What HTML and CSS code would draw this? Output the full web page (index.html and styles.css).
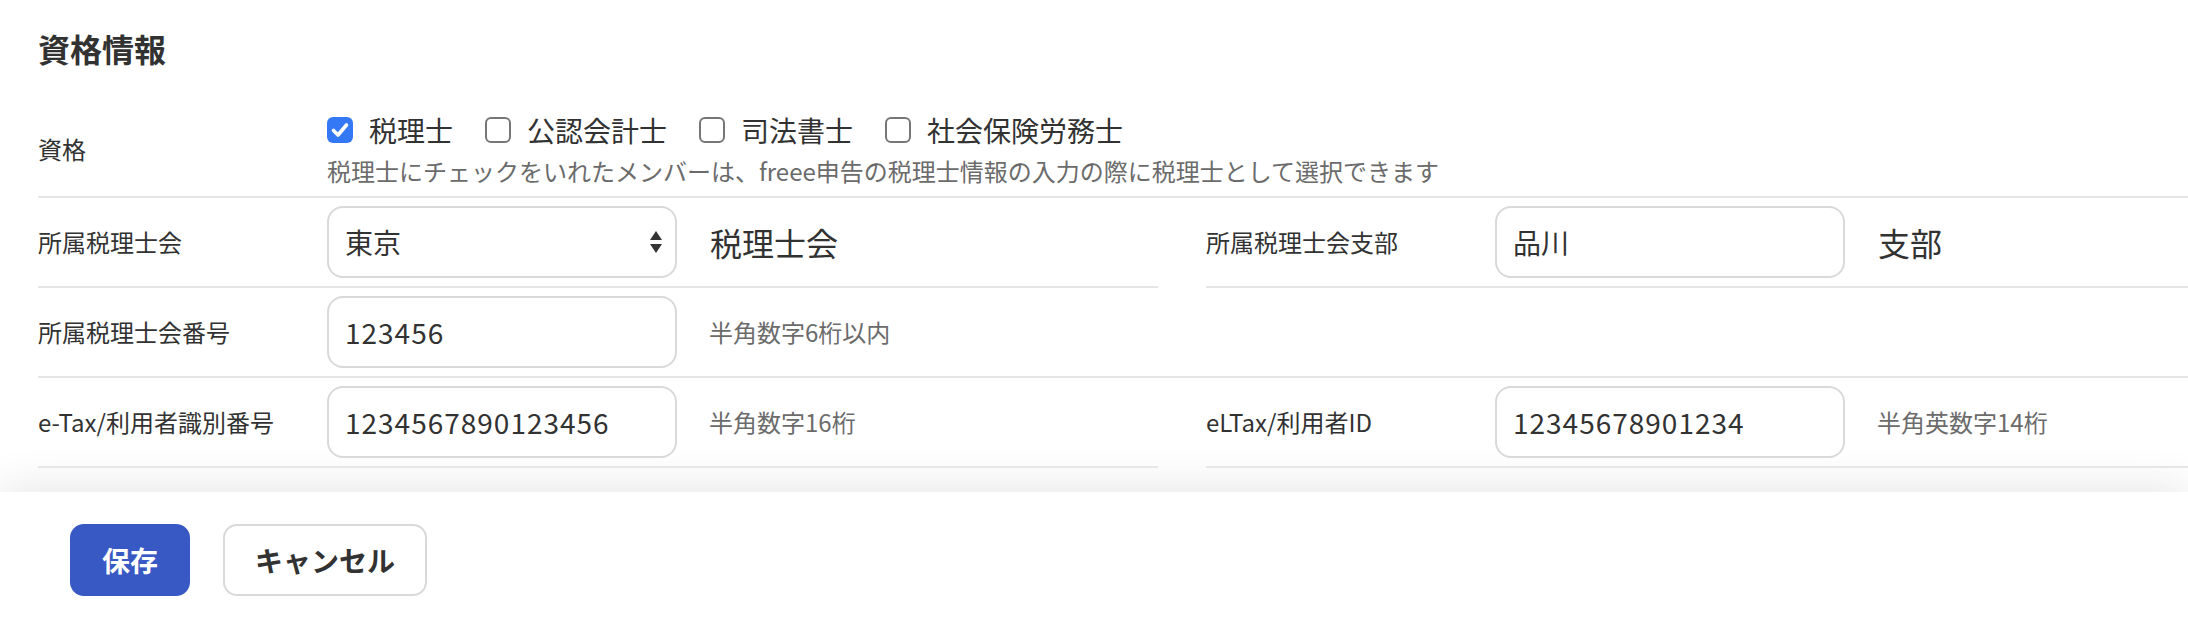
FILE: index.html
```html
<!DOCTYPE html>
<html>
<head>
    <title>資格情報</title>
    <meta name="viewport" content="width=device-width, initial-scale=1">
    <link rel="stylesheet" href="styles.css">
</head>
<body>
    <section class="section">
        <h2 class="section-title">資格情報</h2>

        <div class="row row-full row-tall">
            <div class="row-label">資格</div>
            <div class="row-body">
                <div class="check-list">
                    <label class="check">
                        <span class="check-box is-checked">
                            <svg width="26" height="26" viewBox="0 0 26 26"><polyline points="6.5,13.5 11,18 19.5,8" fill="none" stroke="#fff" stroke-width="3.6" stroke-linecap="round" stroke-linejoin="round"/></svg>
                        </span>
                        税理士
                    </label>
                    <label class="check"><span class="check-box"></span>公認会計士</label>
                    <label class="check"><span class="check-box"></span>司法書士</label>
                    <label class="check"><span class="check-box"></span>社会保険労務士</label>
                </div>
                <p class="hint">税理士にチェックをいれたメンバーは、freee申告の税理士情報の入力の際に税理士として選択できます</p>
            </div>
        </div>

        <div class="row-split">
            <div class="row">
                <div class="row-label">所属税理士会</div>
                <div class="select-wrap">
                    <select class="field">
                        <option>東京</option>
                    </select>
                    <svg class="select-arrow" width="12" height="24" viewBox="0 0 12 24">
                        <polygon points="0,10 6,1 12,10" fill="#333"/>
                        <polygon points="0,14 12,14 6,23" fill="#333"/>
                    </svg>
                </div>
                <span class="suffix">税理士会</span>
            </div>
            <div class="row">
                <div class="row-label">所属税理士会支部</div>
                <input class="field" type="text" value="品川">
                <span class="suffix">支部</span>
            </div>
        </div>

        <div class="row row-full">
            <div class="row-label">所属税理士会番号</div>
            <input class="field field-num" type="text" value="123456">
            <span class="hint hint-side">半角数字6桁以内</span>
        </div>

        <div class="row-split">
            <div class="row">
                <div class="row-label">e-Tax/利用者識別番号</div>
                <input class="field field-num" type="text" value="1234567890123456">
                <span class="hint hint-side">半角数字16桁</span>
            </div>
            <div class="row">
                <div class="row-label">eLTax/利用者ID</div>
                <input class="field field-num" type="text" value="12345678901234">
                <span class="hint hint-side">半角英数字14桁</span>
            </div>
        </div>
    </section>

    <footer class="footer">
        <button class="btn btn-primary">保存</button>
        <button class="btn">キャンセル</button>
    </footer>
</body>
</html>
```

FILE: styles.css
```css
html, body {
    margin: 0;
    padding: 0;
    overflow: hidden;
}

body {
    font-family: "Noto Sans CJK JP", "Noto Sans", sans-serif;
    color: #323232;
    background-color: #fff;
    width: 2188px;
}

.section {
    padding: 0 0 24px 38px;
    overflow: hidden;
}

.section-title {
    font-size: 32px;
    line-height: 48px;
    font-weight: bold;
    margin: 24px 0 30px 0;
}

.row {
    display: flex;
    align-items: center;
    padding: 8px 0;
    border-bottom: 2px solid #e6e6e6;
}

.row-split {
    display: grid;
    grid-template-columns: 1120px 1120px;
    column-gap: 48px;
}

.row-label {
    width: 289px;
    flex-shrink: 0;
    font-size: 24px;
    line-height: 34px;
}

.check-list {
    display: flex;
    align-items: center;
    height: 40px;
}

.check {
    display: flex;
    align-items: center;
    font-size: 28px;
    line-height: 40px;
    margin-right: 32px;
}

.check-box {
    display: inline-flex;
    width: 26px;
    height: 26px;
    box-sizing: border-box;
    border: 2px solid #767676;
    border-radius: 6px;
    margin-right: 16px;
    background-color: #fff;
}

.check-box.is-checked {
    border: none;
    background-color: #3478f6;
}

.hint {
    font-size: 24px;
    line-height: 34px;
    color: #6b6b6b;
    margin: 4px 0 0 0;
}

.hint-side {
    margin: 0 0 0 32px;
}

.field {
    width: 350px;
    height: 72px;
    box-sizing: border-box;
    border: 2px solid #d9d9d9;
    border-radius: 16px;
    padding: 0 16px;
    font-family: inherit;
    font-size: 28px;
    color: #323232;
    background-color: #fff;
    outline: none;
}

.field-num {
    letter-spacing: 1px;
}

select.field {
    appearance: none;
    -webkit-appearance: none;
    display: block;
}

.select-wrap {
    position: relative;
}

.select-arrow {
    position: absolute;
    right: 15px;
    top: 24px;
    pointer-events: none;
}

.suffix {
    font-size: 32px;
    line-height: 48px;
    margin-left: 33px;
}

.footer {
    display: flex;
    gap: 33px;
    padding: 32px 70px;
    background-color: #fff;
    box-shadow: 0 0 48px rgba(0, 0, 0, 0.12);
}

.btn {
    height: 72px;
    padding: 0 30px;
    border: 2px solid #d9d9d9;
    border-radius: 14px;
    background-color: #fff;
    color: #323232;
    font-family: inherit;
    font-size: 28px;
    font-weight: bold;
}

.btn-primary {
    background-color: #3858c4;
    border-color: #3858c4;
    color: #fff;
}
```
